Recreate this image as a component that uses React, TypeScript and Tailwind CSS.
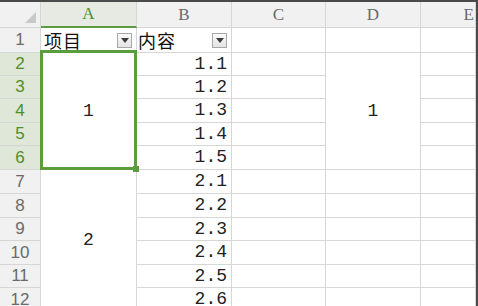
import React from "react";

const line = "border-r border-b border-[#d6d6d6]";
const hdr = `${line} bg-[#f1f1f1] flex items-center justify-center text-[#6a6a6a]`;
const cell = `${line} bg-white`;
const mono = { fontFamily: '"Liberation Mono", monospace' };
const cjk = { fontFamily: '"Noto Sans CJK SC", "Liberation Serif", serif' };
const serif = { fontFamily: '"Liberation Serif", serif' };
const sans = { fontFamily: '"Liberation Sans", Arial, sans-serif' };

function Drop() {
  return (
    <div className="w-[15px] h-[15px] border border-[#a8a8a8] bg-gradient-to-b from-[#fafafa] to-[#e4e4e4] flex items-center justify-center shrink-0">
      <svg width="8" height="5" viewBox="0 0 8 5">
        <path d="M0 0 L8 0 L4 5 Z" fill="#3c3c3c" />
      </svg>
    </div>
  );
}

function RowHead({ n, sel }: { n: number; sel?: boolean }) {
  return (
    <div
      className={`${line} flex items-center justify-center text-[17px] ${
        sel ? "bg-[#dfe8d8] text-[#4e8d2e]" : "bg-[#f1f1f1] text-[#6a6a6a]"
      }`}
      style={sans}
    >
      {n}
    </div>
  );
}

function Num({ v }: { v: string }) {
  return (
    <div className={`${cell} flex items-center justify-end pr-[4px] text-[18px] text-[#222]`} style={mono}>
      {v}
    </div>
  );
}

export default function App() {
  const rows: React.ReactNode[] = [];
  const bvals = ["1.1", "1.2", "1.3", "1.4", "1.5", "2.1", "2.2", "2.3", "2.4", "2.5", "2.6"];
  for (let r = 2; r <= 12; r++) {
    rows.push(<RowHead key={`h${r}`} n={r} sel={r >= 2 && r <= 6} />);
    if (r === 2) {
      rows.push(
        <div key="a2" className={`${cell} row-span-5 flex items-center justify-center text-[18px] text-[#222]`} style={mono}>
          1
        </div>
      );
    }
    if (r === 7) {
      rows.push(
        <div key="a7" className={`${cell} row-span-6 flex items-center justify-center text-[18px] text-[#222]`} style={mono}>
          2
        </div>
      );
    }
    rows.push(<Num key={`b${r}`} v={bvals[r - 2]} />);
    rows.push(<div key={`c${r}`} className={cell} />);
    if (r === 2) {
      rows.push(
        <div key="d2" className={`${cell} row-span-5 flex items-center justify-center text-[18px] text-[#222]`} style={mono}>
          1
        </div>
      );
    } else if (r > 6) {
      rows.push(<div key={`d${r}`} className={cell} />);
    }
    rows.push(<div key={`e${r}`} className={cell} />);
  }

  return (
    <div className="w-[478px] h-[306px] overflow-hidden bg-white">
      <div className="relative border-t-2 border-r-2 border-[#4a4a4a] w-[478px]">
        <div className="grid grid-cols-[41px_96px_95px_94px_95px_55px] grid-rows-[26px_25px_23px_23px_24px_23px_24px_24px_24px_23px_24px_23px_24px]">
          {/* header row */}
          <div className={`${hdr} relative`}>
            <svg className="absolute right-[4px] bottom-[4px]" width="11" height="11" viewBox="0 0 11 11">
              <path d="M11 0 L11 11 L0 11 Z" fill="#c9c9c9" />
            </svg>
          </div>
          <div
            className="border-r border-[#d6d6d6] border-b-2 border-b-[#5b9c3c] bg-[#e6eae2] flex items-center justify-center text-[17px] text-[#4e8d2e]"
            style={serif}
          >
            A
          </div>
          <div className={`${hdr} text-[17px]`} style={serif}>B</div>
          <div className={`${hdr} text-[17px]`} style={serif}>C</div>
          <div className={`${hdr} text-[17px]`} style={serif}>D</div>
          <div className={`${hdr} text-[17px] justify-end pr-[1px]`} style={serif}>E</div>

          {/* row 1 */}
          <RowHead n={1} />
          <div className={`${cell} flex items-center justify-between pl-[3px] pr-[4px] text-[18px] tracking-[1px] text-[#111]`} style={cjk}>
            <span>项目</span>
            <Drop />
          </div>
          <div className={`${cell} flex items-center justify-between pl-[1px] pr-[4px] text-[18px] tracking-[1px] text-[#111]`} style={cjk}>
            <span>内容</span>
            <Drop />
          </div>
          <div className={cell} />
          <div className={cell} />
          <div className={cell} />

          {rows}
        </div>

        {/* selection overlay */}
        <div className="absolute left-[40px] top-[48px] w-[97px] h-[120px] border-[3px] border-[#5b9c3c] pointer-events-none" />
        <div className="absolute left-[133px] top-[164px] w-[6px] h-[6px] bg-[#5b9c3c] pointer-events-none" />
      </div>
    </div>
  );
}
